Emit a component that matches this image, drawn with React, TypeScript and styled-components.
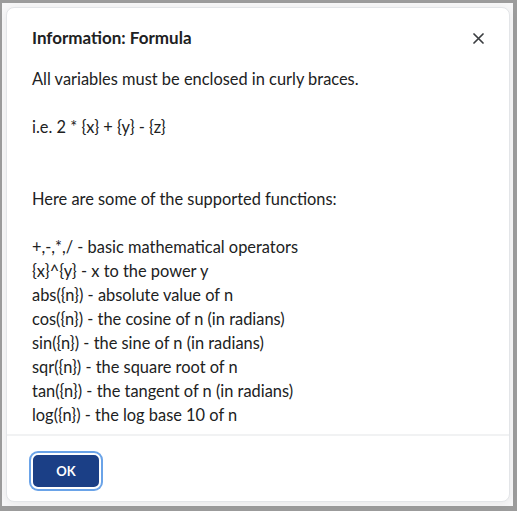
import React from "react";
import styled, { createGlobalStyle } from "styled-components";

const Global = createGlobalStyle`
  html, body { margin: 0; padding: 0; }
  body {
    background: #9c9c9c;
    font-family: Lato, "Noto Sans", sans-serif;
    -webkit-font-smoothing: antialiased;
  }
`;

const Frame = styled.div`
  box-sizing: border-box;
  width: 517px;
  height: 511px;
  padding: 3px 4px 5px 2px;
  background: #9c9c9c;
`;

const Page = styled.div`
  box-sizing: border-box;
  height: 100%;
  padding: 4px 3px 4px 4px;
  background: #f7f7f8;
  display: flex;
`;

const Dialog = styled.div`
  box-sizing: border-box;
  flex: 1;
  display: flex;
  flex-direction: column;
  background: #ffffff;
  border: 1px solid #e3e5e8;
  border-radius: 8px;
  box-shadow: 0 2px 10px rgba(0, 0, 0, 0.06);
  color: #202122;
`;

const Header = styled.div`
  display: flex;
  align-items: center;
  justify-content: space-between;
  padding: 20px 20px 0 25px;
  height: 20px;
`;

const Title = styled.h2`
  margin: 0;
  font-size: 17px;
  font-weight: 700;
  line-height: 20px;
  color: #202122;
`;

const CloseButton = styled.button`
  display: flex;
  align-items: center;
  justify-content: center;
  width: 22px;
  height: 22px;
  padding: 0;
  border: none;
  background: transparent;
  color: #3a3d40;
  cursor: pointer;
`;

const Body = styled.div`
  flex: 1;
  padding: 19px 25px 0 25px;
  font-size: 16.4px;
  line-height: 24px;
  color: #202122;
`;

const Footer = styled.div`
  border-top: 2px solid #f1f2f3;
  padding: 17px 0 0 24px;
  height: 67px;
  box-sizing: border-box;
`;

const OkButton = styled.button`
  box-sizing: border-box;
  display: block;
  width: 70px;
  height: 36px;
  border-radius: 7px;
  border: 2px solid #ffffff;
  background: #1b3f86;
  box-shadow: 0 0 0 2px #6aa3e8;
  color: #ffffff;
  font-family: Lato, "Noto Sans", sans-serif;
  font-size: 13px;
  font-weight: 700;
  cursor: pointer;
`;

const lines: string[] = [
  "All variables must be enclosed in curly braces.",
  "",
  "i.e. 2 * {x} + {y} - {z}",
  "",
  "",
  "Here are some of the supported functions:",
  "",
  "+,-,*,/ - basic mathematical operators",
  "{x}^{y} - x to the power y",
  "abs({n}) - absolute value of n",
  "cos({n}) - the cosine of n (in radians)",
  "sin({n}) - the sine of n (in radians)",
  "sqr({n}) - the square root of n",
  "tan({n}) - the tangent of n (in radians)",
  "log({n}) - the log base 10 of n",
];

const Line = styled.div`
  min-height: 24px;
  white-space: pre;
`;

export default function App() {
  return (
    <>
      <Global />
      <Frame>
        <Page>
          <Dialog role="dialog" aria-label="Information: Formula">
            <Header>
              <Title>Information: Formula</Title>
              <CloseButton aria-label="Close">
                <svg width="11" height="11" viewBox="0 0 11 11" fill="none">
                  <path d="M1 1L10 10M10 1L1 10" stroke="currentColor" strokeWidth="1.7" strokeLinecap="round" />
                </svg>
              </CloseButton>
            </Header>
            <Body>
              {lines.map((l, i) => (
                <Line key={i}>{l}</Line>
              ))}
            </Body>
            <Footer>
              <OkButton>OK</OkButton>
            </Footer>
          </Dialog>
        </Page>
      </Frame>
    </>
  );
}
